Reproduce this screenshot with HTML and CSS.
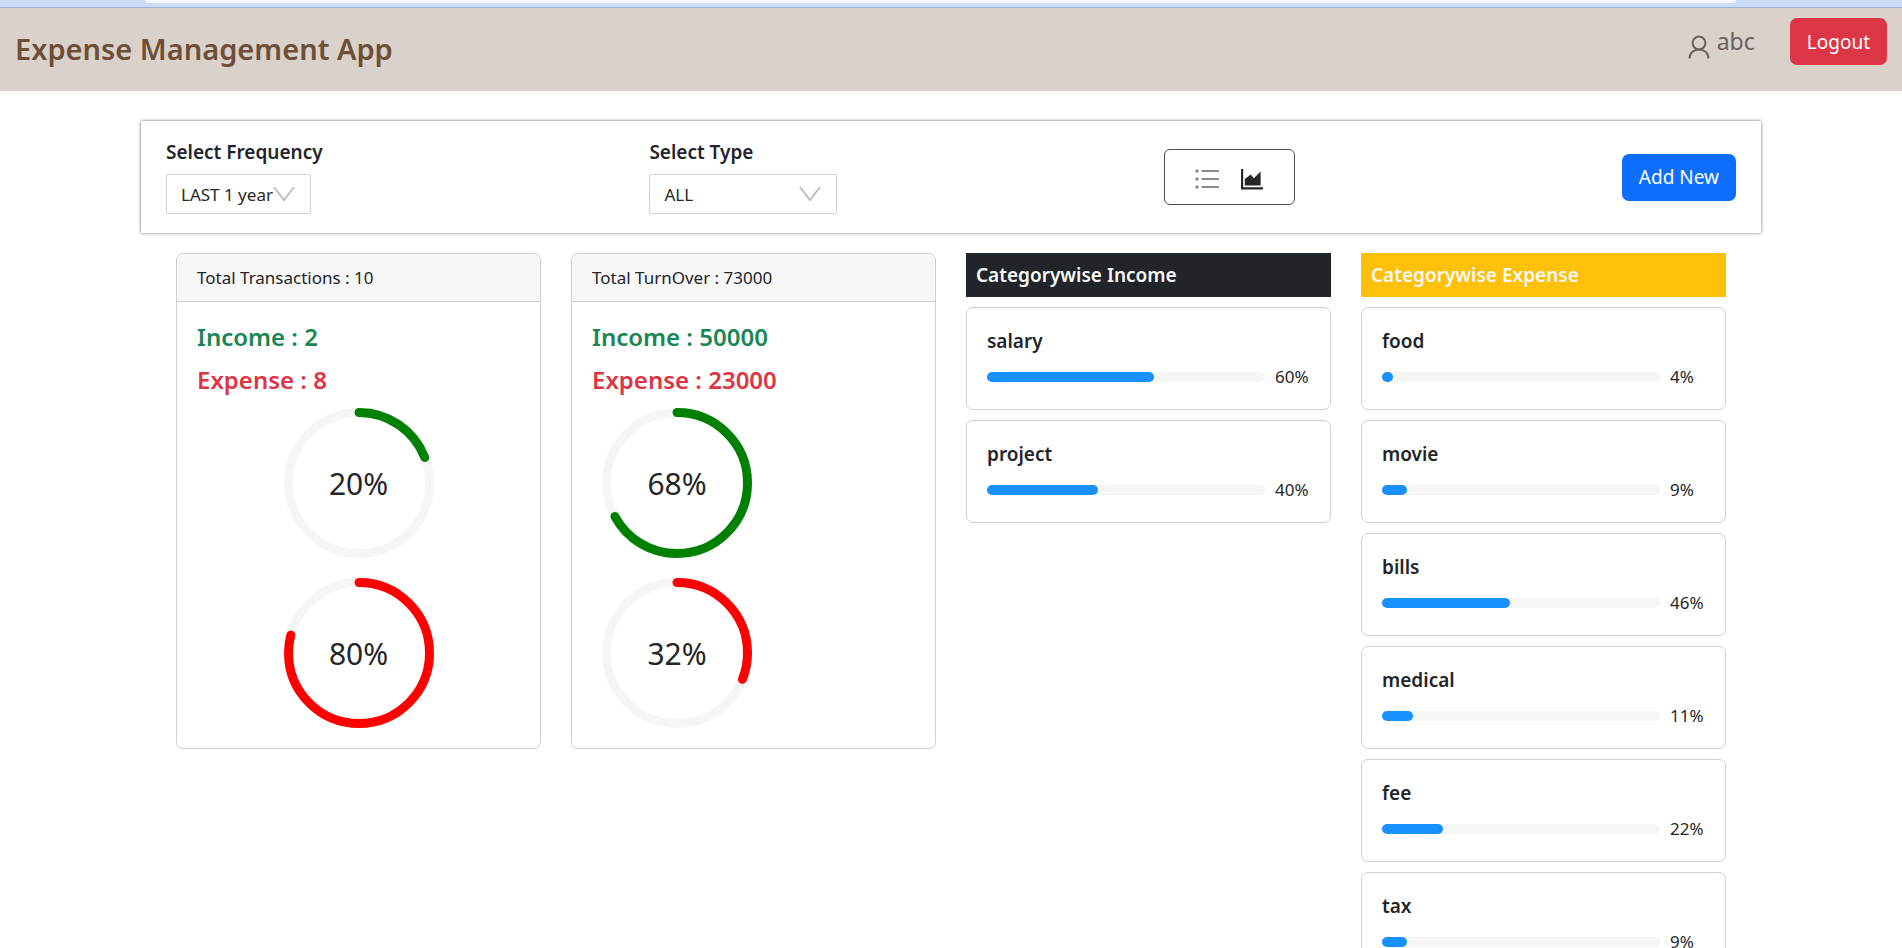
FILE: index.html
```html
<!DOCTYPE html>
<html lang="en">
<head>
    <meta charset="UTF-8">
    <meta name="viewport" content="width=device-width, initial-scale=1.0">
    <title>Expense Management App</title>
    <link rel="stylesheet" href="styles.css">
</head>
<body>
    <div class="browser-strip"><div class="address-bar"></div></div>
    <header class="navbar">
        <h1 class="brand">Expense Management App</h1>
        <div class="nav-right">
            <div class="user">
                <svg class="user-icon" viewBox="0 0 22 24" aria-hidden="true"><circle cx="11" cy="8" r="6.4"/><path d="M1.5 23.5c0-5.4 4-9.1 9.5-9.1s9.500 3.700 9.500 9.100"/></svg>
                <span>abc</span>
            </div>
            <button class="btn btn-danger">Logout</button>
        </div>
    </header>

    <section class="filters">
        <div class="filter">
            <label for="frequency">Select Frequency</label>
            <div class="select-box select-frequency">
                <select id="frequency">
                    <option>LAST 1 week</option>
                    <option>LAST 1 month</option>
                    <option selected>LAST 1 year</option>
                </select>
                <svg class="arrow" viewBox="0 0 22 16" aria-hidden="true"><path d="M1 1l10 13L21 1"/></svg>
            </div>
        </div>
        <div class="filter">
            <label for="type">Select Type</label>
            <div class="select-box select-type">
                <select id="type">
                    <option>ALL</option>
                    <option>INCOME</option>
                    <option>EXPENSE</option>
                </select>
                <svg class="arrow" viewBox="0 0 22 16" aria-hidden="true"><path d="M1 1l10 13L21 1"/></svg>
            </div>
        </div>
        <div class="switch-icons">
            <button class="icon-btn" aria-label="List view">
                <svg viewBox="0 0 24 24" aria-hidden="true"><g fill="#8c8c8c"><circle cx="2" cy="4" r="1.700"/><circle cx="2" cy="12" r="1.700"/><circle cx="2" cy="20" r="1.700"/><path d="M6.500 3H24v2H6.500zM6.500 11H24v2H6.500zM6.500 19H24v2H6.500z"/></g></svg>
            </button>
            <button class="icon-btn active" aria-label="Chart view">
                <svg viewBox="0 0 24 24" aria-hidden="true"><path fill="#262626" d="M1 2h2.200v18.300H23v2.200H1zM4.800 18.500v-6.500L10.800 7.600l3 3.700 6.800-6.800v14z"/></svg>
            </button>
        </div>
        <button class="btn btn-primary">Add New</button>
    </section>

    <main class="analytics">
        <section class="card">
            <div class="card-header">Total Transactions : 10</div>
            <div class="card-body">
                <h2 class="text-success">Income : 2</h2>
                <h2 class="text-danger">Expense : 8</h2>
                <div class="circles centered">
                    <div class="circle">
                        <svg viewBox="0 0 100 100" aria-hidden="true"><circle class="trail" cx="50" cy="50" r="47"/><circle class="path green" cx="50" cy="50" r="47" pathLength="100" stroke-dasharray="19.100 100"/></svg>
                        <span>20%</span>
                    </div>
                    <div class="circle">
                        <svg viewBox="0 0 100 100" aria-hidden="true"><circle class="trail" cx="50" cy="50" r="47"/><circle class="path red" cx="50" cy="50" r="47" pathLength="100" stroke-dasharray="79.100 100"/></svg>
                        <span>80%</span>
                    </div>
                </div>
            </div>
        </section>

        <section class="card">
            <div class="card-header">Total TurnOver : 73000</div>
            <div class="card-body">
                <h2 class="text-success">Income : 50000</h2>
                <h2 class="text-danger">Expense : 23000</h2>
                <div class="circles">
                    <div class="circle">
                        <svg viewBox="0 0 100 100" aria-hidden="true"><circle class="trail" cx="50" cy="50" r="47"/><circle class="path green" cx="50" cy="50" r="47" pathLength="100" stroke-dasharray="67.100 100"/></svg>
                        <span>68%</span>
                    </div>
                    <div class="circle">
                        <svg viewBox="0 0 100 100" aria-hidden="true"><circle class="trail" cx="50" cy="50" r="47"/><circle class="path red" cx="50" cy="50" r="47" pathLength="100" stroke-dasharray="31.100 100"/></svg>
                        <span>32%</span>
                    </div>
                </div>
            </div>
        </section>

        <section class="category">
            <h3 class="category-title bg-dark">Categorywise Income</h3>
            <div class="category-card">
                <h4>salary</h4>
                <div class="progress"><div class="track"><div class="bar" style="width: 60%"></div></div><span>60%</span></div>
            </div>
            <div class="category-card">
                <h4>project</h4>
                <div class="progress"><div class="track"><div class="bar" style="width: 40%"></div></div><span>40%</span></div>
            </div>
        </section>

        <section class="category">
            <h3 class="category-title bg-warning">Categorywise Expense</h3>
            <div class="category-card">
                <h4>food</h4>
                <div class="progress"><div class="track"><div class="bar" style="width: 4%"></div></div><span>4%</span></div>
            </div>
            <div class="category-card">
                <h4>movie</h4>
                <div class="progress"><div class="track"><div class="bar" style="width: 9%"></div></div><span>9%</span></div>
            </div>
            <div class="category-card">
                <h4>bills</h4>
                <div class="progress"><div class="track"><div class="bar" style="width: 46%"></div></div><span>46%</span></div>
            </div>
            <div class="category-card">
                <h4>medical</h4>
                <div class="progress"><div class="track"><div class="bar" style="width: 11%"></div></div><span>11%</span></div>
            </div>
            <div class="category-card">
                <h4>fee</h4>
                <div class="progress"><div class="track"><div class="bar" style="width: 22%"></div></div><span>22%</span></div>
            </div>
            <div class="category-card">
                <h4>tax</h4>
                <div class="progress"><div class="track"><div class="bar" style="width: 9%"></div></div><span>9%</span></div>
            </div>
        </section>
    </main>
</body>
</html>
```
FILE: styles.css
```css
* {
    box-sizing: border-box;
}
html {
    scrollbar-width: none;
}
body {
    margin: 0;
    font-family: "Noto Sans", sans-serif;
    font-size: 17px;
    line-height: 27px;
    color: #212529;
    background-color: #fff;
}
h1, h2, h3, h4 {
    margin: 0;
    font-weight: 600;
}
button, select {
    font-family: inherit;
    cursor: pointer;
}

/* browser edge above the page */
.browser-strip {
    height: 8px;
    padding: 0 166px 0 145px;
    background-color: #cbdcf7;
    border-bottom: 1px solid #9db3d6;
}
.address-bar {
    height: 3px;
    background-color: #f3f8fe;
    border-radius: 0 0 6px 6px;
}

.navbar {
    display: flex;
    justify-content: space-between;
    align-items: flex-start;
    padding: 10px 15px 24px;
    background-color: #dad1cb;
}
.brand {
    padding-top: 13px;
    font-size: 29px;
    line-height: 36px;
    color: #6f4e37;
}
.nav-right {
    display: flex;
    gap: 35px;
}
.user {
    display: flex;
    align-items: center;
    gap: 7px;
    height: 47px;
    font-size: 23px;
    color: #6b6161;
}
.user-icon {
    width: 22px;
    height: 24px;
    margin-top: 10px;
    fill: none;
    stroke: #6b6161;
    stroke-width: 2;
}
.btn {
    height: 47px;
    padding: 0 17px;
    border: none;
    border-radius: 7px;
    font-size: 19px;
    line-height: 30px;
    color: #fff;
}
.btn-danger {
    background-color: #dc3545;
}
.btn-primary {
    background-color: #0d6efd;
}

.filters {
    display: flex;
    justify-content: space-between;
    align-items: center;
    margin: 30px 141px 20px;
    padding: 16px 25px;
    box-shadow: 0 0 3px rgba(0, 0, 0, 0.6);
}
.filter {
    padding-bottom: 3px;
}
.filter label {
    display: block;
    margin-bottom: 7px;
    font-size: 19px;
    line-height: 30px;
    font-weight: 600;
}
.select-box {
    display: grid;
    align-items: center;
    height: 40px;
    border: 1px solid #d0d0d0;
    border-radius: 2px;
}
.select-frequency {
    width: 145px;
}
.select-type {
    width: 188px;
}
.select-box select {
    grid-area: 1 / 1;
    width: 100%;
    height: 36px;
    padding: 0 0 0 14px;
    border: none;
    background: none;
    appearance: none;
    font-size: 17px;
    color: #262626;
}
.arrow {
    grid-area: 1 / 1;
    justify-self: end;
    width: 22px;
    height: 16px;
    margin-right: 15px;
    fill: none;
    stroke: #bfbfbf;
    stroke-width: 2;
    pointer-events: none;
}
.switch-icons {
    display: flex;
    gap: 21px;
    padding: 17px 30px 13px;
    border: 1px solid #4d4d52;
    border-radius: 6px;
}
.icon-btn {
    display: flex;
    padding: 0;
    border: none;
    background: none;
}
.icon-btn svg {
    width: 24px;
    height: 24px;
}

.analytics {
    display: grid;
    grid-template-columns: repeat(4, 1fr);
    align-items: start;
    gap: 30px;
    margin: 0 176px;
}
.card {
    border: 1px solid #cfcfcf;
    border-radius: 7px;
    overflow: hidden;
}
.card-header {
    padding: 10px 20px;
    border-bottom: 1px solid #cfcfcf;
    background-color: #f7f7f7;
}
.card-body {
    padding: 18px 20px 20px;
}
.card-body h2 {
    margin-bottom: 10px;
    font-size: 24px;
    line-height: 33px;
}
.text-success {
    color: #198754;
}
.text-danger {
    color: #dc3545;
}
.circles {
    display: flex;
    flex-direction: column;
    gap: 20px;
    padding: 2px 0 0 10px;
}
.circles.centered {
    align-items: center;
    padding-left: 0;
}
.circle {
    display: grid;
    place-items: center;
    width: 150px;
    height: 150px;
}
.circle svg, .circle span {
    grid-area: 1 / 1;
}
.circle svg {
    width: 150px;
    height: 150px;
    transform: rotate(-90deg);
}
.circle circle {
    fill: none;
    stroke-width: 6;
}
.circle .trail {
    stroke: #f5f5f5;
}
.circle .path {
    stroke-linecap: round;
}
.green {
    stroke: green;
}
.red {
    stroke: red;
}
.circle span {
    font-size: 30px;
    color: #262626;
}

.category {
    display: flex;
    flex-direction: column;
    gap: 10px;
}
.category-title {
    padding: 10px;
    font-size: 19px;
    line-height: 24px;
    color: #f8f9fa;
}
.bg-dark {
    background-color: #212529;
}
.bg-warning {
    background-color: #ffc107;
}
.category-card {
    padding: 21px 20px 19px;
    border: 1px solid #cfcfcf;
    border-radius: 7px;
}
.category-card h4 {
    margin-bottom: 10px;
    font-size: 19px;
    line-height: 24px;
}
.progress {
    display: flex;
    align-items: center;
    gap: 10px;
}
.track {
    flex: 1;
    height: 10px;
    border-radius: 5px;
    background-color: #f5f5f5;
}
.bar {
    height: 10px;
    border-radius: 5px;
    background-color: #1890ff;
}
.progress span {
    width: 35px;
    color: #262626;
}
```
